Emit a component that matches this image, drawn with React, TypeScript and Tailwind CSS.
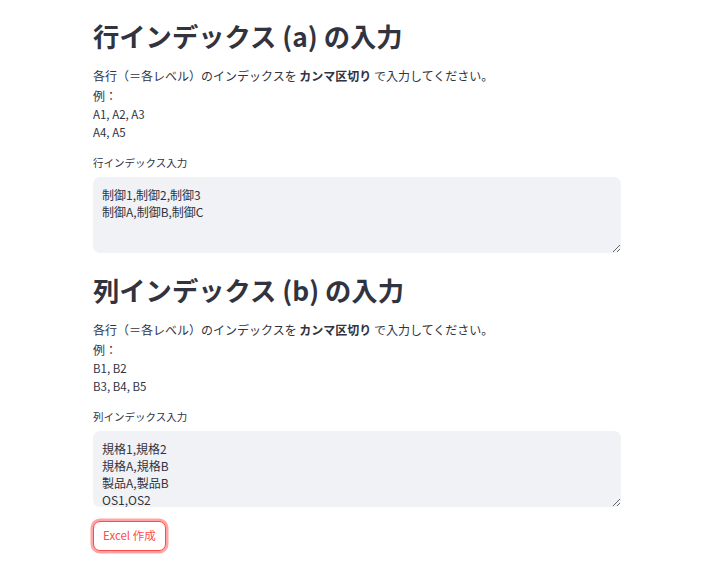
import React from "react";

const font = { fontFamily: '"Noto Sans CJK JP", "Noto Sans", sans-serif' };

function Section({
  title,
  label,
  examples,
  value,
  rows,
}: {
  title: string;
  label: string;
  examples: string[];
  value: string;
  rows: number;
}) {
  return (
    <div className="flex flex-col">
      <h2 className="text-[26.3px] leading-[32px] font-bold text-[#31333f]">{title}</h2>
      <div className="mt-[14px] text-[12px] text-[#31333f]">
        <div className="leading-[20px]">
          各行（＝各レベル）のインデックスを <span className="font-bold">カンマ区切り</span> で入力してください。
        </div>
        <div className="leading-[20px]">例：</div>
        <div className="text-[11.5px] leading-[17px]">{examples[0]}</div>
        <div className="text-[11.5px] leading-[18px]">{examples[1]}</div>
      </div>
      <label className="mt-[14px] text-[10.5px] leading-[16px] text-[#31333f]">{label}</label>
      <textarea
        defaultValue={value}
        rows={rows}
        className="mt-[6px] w-[528px] h-[76px] rounded-[7px] bg-[#f0f2f6] text-[#31333f] text-[12px] leading-[17px] px-[9px] pt-[9px] pb-0 outline-none border-0"
        style={font}
      />
    </div>
  );
}

export default function App() {
  return (
    <div className="min-h-[562px] bg-white" style={font}>
      <div className="ml-[93px] w-[528px] pt-[20px] flex flex-col">
        <Section
          title="行インデックス (a) の入力"
          label="行インデックス入力"
          examples={["A1, A2, A3", "A4, A5"]}
          value={"制御1,制御2,制御3\n制御A,制御B,制御C"}
          rows={3}
        />
        <div className="mt-[21px]">
          <Section
            title="列インデックス (b) の入力"
            label="列インデックス入力"
            examples={["B1, B2", "B3, B4, B5"]}
            value={"規格1,規格2\n規格A,規格B\n製品A,製品B\nOS1,OS2"}
            rows={4}
          />
        </div>
        <div className="mt-[14px]">
          <button
            className="h-[30px] px-[9px] rounded-[7px] border border-[#ff4b4b] text-[#ff4b4b] text-[11.5px] bg-white shadow-[0_0_0_2.5px_rgba(255,75,75,0.5)]"
            style={font}
          >
            Excel 作成
          </button>
        </div>
      </div>
    </div>
  );
}
